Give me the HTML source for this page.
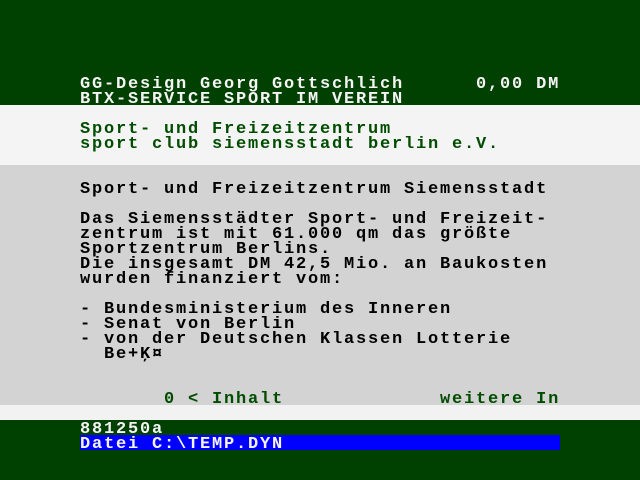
<!DOCTYPE html>
<html><head><meta charset="utf-8"><style>
body{margin:0;width:640px;height:480px;overflow:hidden;background:#004000;position:relative}
.b{position:absolute;left:0;width:640px}
pre{position:absolute;margin:0;left:80px;font:bold 17px/15px "Liberation Mono",monospace;letter-spacing:1.8px;white-space:pre;padding-top:2px}
.w{color:#f4f4f4}.g{color:#004c00}.k{color:#000}
</style></head><body>
<div class="b" style="top:0;height:105px;background:#004000"></div>
<div class="b" style="top:105px;height:60px;background:#f4f4f4"></div>
<div class="b" style="top:165px;height:240px;background:#d3d3d3"></div>
<div class="b" style="top:405px;height:15px;background:#f2f2f2"></div>
<div class="b" style="top:420px;height:60px;background:#004000"></div>
<div style="position:absolute;left:80px;top:435px;width:480px;height:15px;background:#0000ff"></div>
<pre class="w" style="top:75px">GG-Design Georg Gottschlich      0,00 DM
BTX-SERVICE SPORT IM VEREIN</pre>
<pre class="g" style="top:120px">Sport- und Freizeitzentrum
sport club siemensstadt berlin e.V.</pre>
<pre class="k" style="top:180px">Sport- und Freizeitzentrum Siemensstadt

Das Siemensstädter Sport- und Freizeit-
zentrum ist mit 61.000 qm das größte
Sportzentrum Berlins.
Die insgesamt DM 42,5 Mio. an Baukosten
wurden finanziert vom:

- Bundesministerium des Inneren
- Senat von Berlin
- von der Deutschen Klassen Lotterie
  Be+Ķ¤</pre>
<pre class="g" style="top:390px">       0 &lt; Inhalt             weitere In</pre>
<pre class="w" style="top:420px">881250a
Datei C:\TEMP.DYN</pre>
</body></html>
